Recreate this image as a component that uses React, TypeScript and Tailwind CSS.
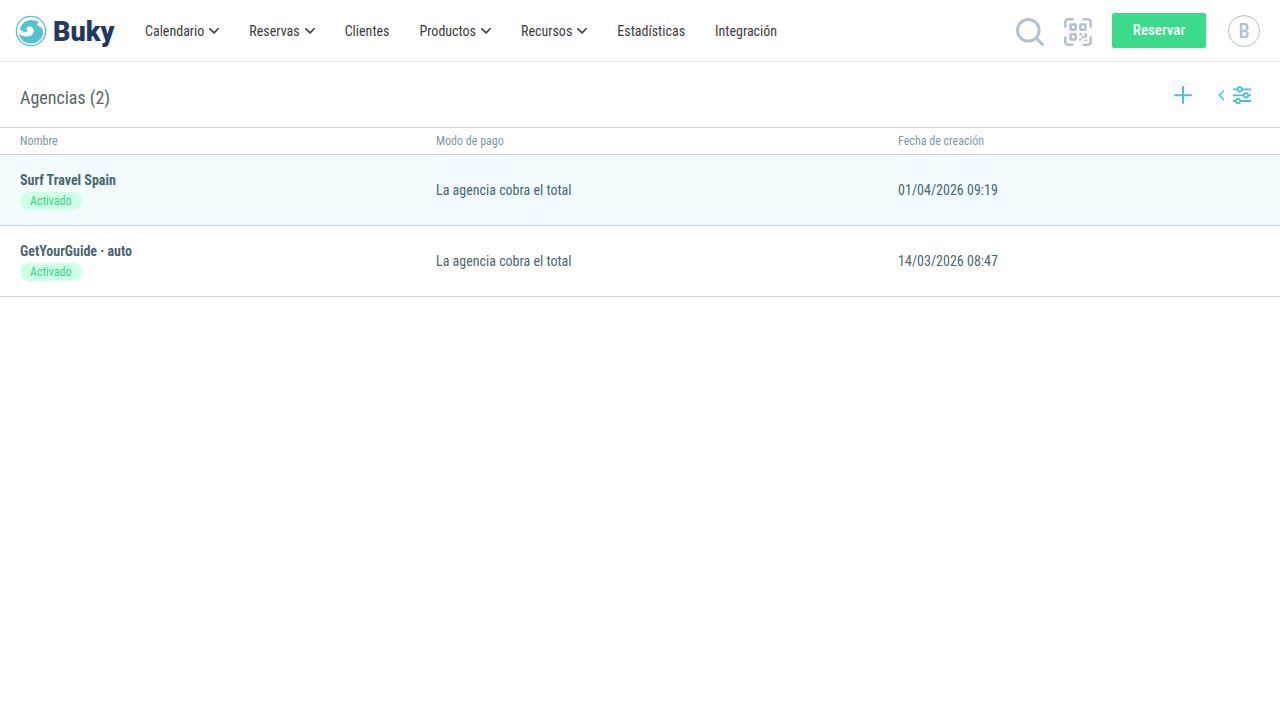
/**
 * Agencias: list of the agencies that sell through the account.
 */

const NAV_ITEMS = [
  { label: "Calendario", menu: true },
  { label: "Reservas", menu: true },
  { label: "Clientes", menu: false },
  { label: "Productos", menu: true },
  { label: "Recursos", menu: true },
  { label: "Estadísticas", menu: false },
  { label: "Integración", menu: false },
];

const AGENCIES = [
  {
    name: "Surf Travel Spain",
    status: "Activado",
    payment: "La agencia cobra el total",
    created: "01/04/2026 09:19",
  },
  {
    name: "GetYourGuide · auto",
    status: "Activado",
    payment: "La agencia cobra el total",
    created: "14/03/2026 08:47",
  },
];

function WaveLogo() {
  return (
    <svg viewBox="0 0 32 32" className="h-8 w-8" aria-hidden="true">
      <circle cx="16" cy="16" r="14.700" fill="none" stroke="#55c1d6" strokeWidth="1.300" />
      <path
        d="M5 14.500C6.200 8.500 10.500 5 16 5c3.300 0 6 .9 8.300 2.800-1.500.1-2.300.7-2.300 1.600 0 1.600 3.300 1.400 5.200 4.200.5 1 .8 2.200.8 3.400C28 23.400 22.700 28.400 16.200 28.400c-6.200 0-11.200-4-12.200-9.700 3.600 2.900 8.800 3.800 12.200 1.700 3.400-2.200 3.400-6.900.2-8.500-2.400-1.100-5 .3-4.900 2.600.9 0 1.500.6 1.300 1.300-.7 1.700-5.500 1.500-7.800-1.300Z"
        fill="#55c1d6"
      />
    </svg>
  );
}

function ChevronDown() {
  return (
    <svg viewBox="0 0 10 6" className="h-1.5 w-2.5" fill="none" aria-hidden="true">
      <path d="M.8.8 5 4.900 9.200.8" stroke="#3c3c3c" strokeWidth="1.600" strokeLinecap="round" strokeLinejoin="round" />
    </svg>
  );
}

function SearchIcon() {
  return (
    <svg viewBox="0 0 28 28" className="h-7 w-7" fill="none" stroke="#b1c1d2" strokeWidth="3" strokeLinecap="round" aria-hidden="true">
      <circle cx="12.300" cy="12.300" r="10.800" />
      <path d="m20.200 20.200 6.200 6.200" />
    </svg>
  );
}

function QrIcon() {
  return (
    <svg viewBox="0 0 28 28" className="h-7 w-7" fill="none" stroke="#b1c1d2" strokeWidth="2.500" strokeLinecap="round" aria-hidden="true">
      <path d="M1.300 8.500V4.300a3 3 0 0 1 3-3h4.200M19.500 1.300h4.200a3 3 0 0 1 3 3v4.200M26.700 19.500v4.200a3 3 0 0 1-3 3h-4.200M8.500 26.700H4.300a3 3 0 0 1-3-3v-4.200" />
      <rect x="6.500" y="6.500" width="5.200" height="5.200" rx=".6" />
      <rect x="16.300" y="6.500" width="5.200" height="5.200" rx=".6" />
      <rect x="6.500" y="16.300" width="5.200" height="5.200" rx=".6" />
      <g fill="#b1c1d2" stroke="none">
        <path d="M15.200 15.200h2.600v2.600h-2.600zM15.200 20.400h2.400v2.400h-2.400zM20.600 15.200H23v4.600h-2.400zM18 18h2.400v2.400H18zM20.600 21.400H23v1.600h-2.400z" />
      </g>
    </svg>
  );
}

function PlusIcon() {
  return (
    <svg viewBox="0 0 18 18" className="h-4.5 w-4.5" fill="none" stroke="#4ebdd0" strokeWidth="2" strokeLinecap="round" aria-hidden="true">
      <path d="M9 1v16M1 9.300h16" />
    </svg>
  );
}

function FiltersIcon() {
  return (
    <svg viewBox="0 0 18 18" className="h-4.5 w-4.5" fill="none" stroke="#4ebdd0" strokeWidth="1.800" aria-hidden="true">
      <path d="M0 3.300h4.400M9 3.300h9M0 9.300h10.700M15.300 9.300H18M0 15h2.700M7.300 15H18" />
      <circle cx="6.700" cy="3.300" r="2.200" />
      <circle cx="13" cy="9.300" r="2.200" />
      <circle cx="5" cy="15" r="2.200" />
    </svg>
  );
}

function Header() {
  return (
    <header className="flex h-[62px] items-center border-b border-[#e6e6e6] pr-5 pl-[15px]">
      <a href="#inicio" className="flex items-center gap-1.5" aria-label="Buky">
        <WaveLogo />
        <span className="w-[62px] pt-0.5 font-['Roboto',sans-serif] text-[27px] leading-8 font-black text-[#233a60]">
          Buky
        </span>
      </a>
      <nav className="ml-[30px] flex gap-[30px] text-sm text-[#3c3c3c]">
        {NAV_ITEMS.map((item) =>
          item.menu ? (
            <button key={item.label} type="button" className="flex items-center gap-[5px]">
              {item.label}
              <ChevronDown />
            </button>
          ) : (
            <a key={item.label} href="#seccion">
              {item.label}
            </a>
          ),
        )}
      </nav>
      <div className="ml-auto flex items-center">
        <div className="flex gap-5 pt-0.5">
          <button type="button" aria-label="Buscar">
            <SearchIcon />
          </button>
          <button type="button" aria-label="Escanear código">
            <QrIcon />
          </button>
        </div>
        <div className="ml-5 border-r-2 border-[#eeeeee]">
          <button
            type="button"
            className="block h-[35px] w-[94px] rounded-[2px] bg-[#3bdb8b] text-[15px] font-medium text-white"
          >
            Reservar
          </button>
        </div>
        <button
          type="button"
          aria-label="Cuenta"
          className="ml-5 h-8 w-8 rounded-full border border-[#b1c1d2] text-xl leading-none font-medium text-[#b1c1d2]"
        >
          B
        </button>
      </div>
    </header>
  );
}

export default function App() {
  return (
    <div className="min-h-screen bg-white font-['Roboto_Condensed',Roboto,sans-serif]">
      <Header />
      <main>
        <div className="flex h-[65px] items-center justify-between pr-[29px] pl-5">
          <h1 className="pt-1.5 text-lg text-[#5a6464]">Agencias (2)</h1>
          <div className="flex items-center">
            <button type="button" aria-label="Añadir agencia">
              <PlusIcon />
            </button>
            <button type="button" aria-label="Filtros" className="ml-[26px] flex items-center gap-2">
              <svg viewBox="0 0 7 12" className="h-3 w-[7px]" fill="none" aria-hidden="true">
                <path d="M6 1.500 1.300 6.300 6 11" stroke="#4ebdd0" strokeWidth="1.400" />
              </svg>
              <FiltersIcon />
            </button>
          </div>
        </div>
        <table className="w-full table-fixed border-collapse text-left">
          <thead>
            <tr className="h-[27px] border-y border-[#ccd6de] text-xs text-[#7f989f]">
              <th className="w-[32.5%] pl-5 font-normal">Nombre</th>
              <th className="w-[36.1%] pl-5 font-normal">Modo de pago</th>
              <th className="pl-5 font-normal">Fecha de creación</th>
            </tr>
          </thead>
          <tbody className="text-sm text-[#4b6670]">
            {AGENCIES.map((agency) => (
              <tr key={agency.name} className="h-[71px] border-b border-[#ccd6de] odd:bg-[#f2fbfd]">
                <td className="pl-5">
                  <a href="#agencia" className="block leading-5 font-bold">
                    {agency.name}
                  </a>
                  <span className="mt-0.5 block h-[18px] w-fit rounded-full bg-[#cfffe6] px-2.5 text-xs leading-[18px] text-[#33d585]">
                    {agency.status}
                  </span>
                </td>
                <td className="pl-5">{agency.payment}</td>
                <td className="pl-5">{agency.created}</td>
              </tr>
            ))}
          </tbody>
        </table>
      </main>
    </div>
  );
}
